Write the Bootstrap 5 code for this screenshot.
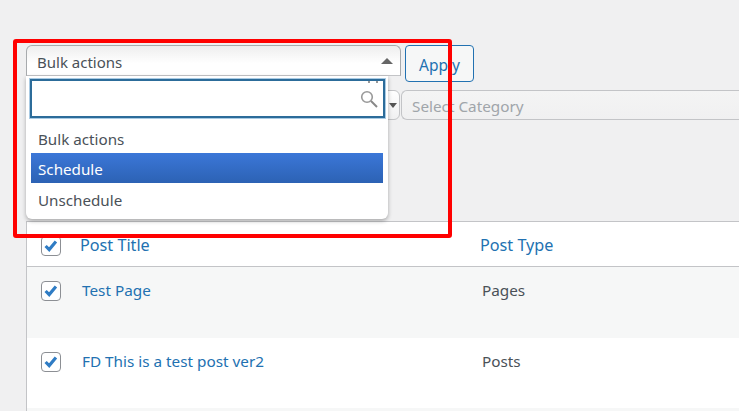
<!DOCTYPE html>
<html lang="en"><head><meta charset="utf-8"><title>Bulk actions</title>
<link href="https://cdn.jsdelivr.net/npm/bootstrap@5.3.0/dist/css/bootstrap.min.css" rel="stylesheet">
<style>
html,body{height:411px;overflow:hidden}
body{background:#f0f0f1;color:#4a5158;font-family:"Noto Sans","Open Sans",sans-serif;font-size:14px;position:relative}
.page-wrap{padding:45px 0 0 26px;width:739px}
.top-row{height:37px;gap:4px}
.sel-one{width:375px;height:31px;border:1px solid #a7aaad;border-bottom-color:#c3c4c7;border-radius:6px 6px 0 0;background:linear-gradient(#eee,#fff 60%);padding:0 7px 0 10px;font-size:15px}
.sel-one span{position:relative;top:2px}
.tri-up{width:0;height:0;border:6px solid transparent;border-top:0;border-bottom:6px solid #666}
.btn-apply{width:69px;height:37px;border:1px solid #2271b1;border-radius:4px;background:#f6f7f7;color:#2271b1;font-size:15.5px;padding:4px 0 0;line-height:1.4}
.filter-row{margin-top:8px;height:30px;gap:1px}
.sel-two{width:374px;height:30px;border:1px solid #c3c4c7;border-radius:6px;background:linear-gradient(#fff,#f0f0f1);padding-right:2px}
.tri-dn{width:0;height:0;border:4px solid transparent;border-bottom:0;border-top:5px solid #555}
.sel-cat{flex:1;height:30px;border:1px solid #c3c4c7;border-right:0;border-radius:6px 0 0 6px;background:linear-gradient(#f4f4f4,#f0f0f1);color:#a0a5aa;padding-left:10px;font-size:15.3px;line-height:31px}
.post-table{margin-top:101px;border-left:1px solid #c3c4c7;border-top:1px solid #c3c4c7;background:#fff}
.head-row{height:45px;border-bottom:1px solid #c3c4c7;font-size:16.2px}
.head-row a{color:#2271b1;text-decoration:none}
.data-row{height:71px;font-size:15.3px;padding-top:13px;line-height:21px}
.data-row.row-plain{height:70px;padding-top:13px}
.data-row a{color:#2271b1;text-decoration:none}
.row-alt{background:#f6f7f7}
.row-end{height:10px;background:#f6f7f7}
.cell-check{width:20px;margin-left:14px}
.head-row .cell-check{padding-top:3px}
.head-row .cell-title{margin-left:19px;width:400px;padding-top:3px}
.head-row .cell-type{padding-top:3px}
.data-row .cell-title{margin-left:21px;width:400px}
.data-row .cell-check{padding-top:1px}
.tick{width:20px;height:20px;border:1px solid #8c8f94;border-radius:4px;background:#fff;flex:none;display:block}
.drop-panel{position:absolute;left:26px;top:76px;width:362px;height:143px;background:#fff;border-radius:0 0 6px 6px;box-shadow:0 2px 4px rgba(0,0,0,.3)}
.search-box{margin:3px 3px 0 4px;height:39px;border:2px solid #2c6c9a;outline:1px solid #a9cbe4;display:flex;justify-content:flex-end;align-items:center;padding-right:5px;position:relative}
.dots{position:absolute;top:0;right:5px;width:10px;height:2px;border-left:2px solid #999;border-right:2px solid #999}
.opt-list{margin-top:4px;font-size:15.2px}
.opt-item{height:30.5px;line-height:32px;padding-left:7px;margin:0 5px 0 5px}
.opt-item:first-child{height:31px;line-height:35px}
.opt-item:last-child{line-height:34px}
.opt-on{background:linear-gradient(#3b77d8,#2c62b4);color:#fff;height:30px}
.red-frame{position:absolute;left:13px;top:39px;width:439px;height:199px;border:4.5px solid #f00;border-radius:3px;pointer-events:none}
</style></head>
<body>
<div class="page-wrap">
  <div class="d-flex top-row align-items-start">
    <div class="sel-one d-flex justify-content-between align-items-center"><span>Bulk actions</span><i class="tri-up"></i></div>
    <button class="btn-apply" type="button">Apply</button>
  </div>
  <div class="d-flex filter-row">
    <div class="sel-two d-flex justify-content-end align-items-center"><i class="tri-dn"></i></div>
    <div class="sel-cat">Select Category</div>
  </div>
  <div class="post-table">
    <div class="d-flex align-items-center head-row">
      <div class="cell-check"><svg class="tick" viewBox="0 0 20 20"><path d="M4 10 8 14 15.500 5" fill="none" stroke="#2f7cc4" stroke-width="3.500"/></svg></div>
      <div class="cell-title"><a href="#">Post Title</a></div>
      <div class="cell-type"><a href="#">Post Type</a></div>
    </div>
    <div class="d-flex align-items-start data-row row-alt">
      <div class="cell-check"><svg class="tick" viewBox="0 0 20 20"><path d="M4 10 8 14 15.500 5" fill="none" stroke="#2f7cc4" stroke-width="3.500"/></svg></div>
      <div class="cell-title"><a href="#">Test Page</a></div>
      <div>Pages</div>
    </div>
    <div class="d-flex align-items-start data-row row-plain">
      <div class="cell-check"><svg class="tick" viewBox="0 0 20 20"><path d="M4 10 8 14 15.500 5" fill="none" stroke="#2f7cc4" stroke-width="3.500"/></svg></div>
      <div class="cell-title"><a href="#">FD This is a test post ver2</a></div>
      <div>Posts</div>
    </div>
    <div class="row-end"></div>
  </div>
</div>
<div class="drop-panel">
  <div class="search-box"><i class="dots"></i><svg width="18" height="18" viewBox="0 0 18 18"><circle cx="7" cy="7" r="5.300" fill="none" stroke="#999" stroke-width="1.600"/><path d="M11 11l6 6" stroke="#888" stroke-width="2"/></svg></div>
  <div class="opt-list">
    <div class="opt-item">Bulk actions</div>
    <div class="opt-item opt-on">Schedule</div>
    <div class="opt-item">Unschedule</div>
  </div>
</div>
<div class="red-frame"></div>
<script src="https://cdn.jsdelivr.net/npm/bootstrap@5.3.0/dist/js/bootstrap.bundle.min.js"></script>
</body></html>
